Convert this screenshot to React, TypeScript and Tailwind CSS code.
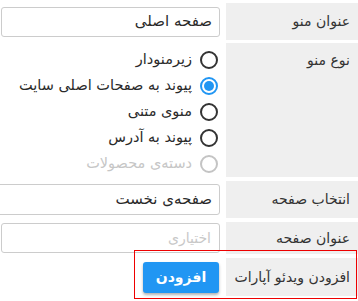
import React from "react";

function Radio({ label, checked, disabled }: { label: string; checked?: boolean; disabled?: boolean }) {
  return (
    <div className="flex items-center h-[26px]">
      <div className="w-[18px] flex justify-center mr-[2px] ml-[8px]">
        {checked ? (
          <div className="w-[18px] h-[18px] rounded-full border-2 border-[#2196f3] flex items-center justify-center">
            <div className="w-[10px] h-[10px] rounded-full bg-[#2196f3]" />
          </div>
        ) : (
          <div className={`w-[18px] h-[18px] rounded-full border-2 ${disabled ? "border-[#c4c4c4]" : "border-[#333]"}`} />
        )}
      </div>
      <span className={`text-[14.5px] ${disabled ? "text-[#c6c6c6]" : "text-[#2a2a2a]"}`}>{label}</span>
    </div>
  );
}

export default function App() {
  return (
    <div
      dir="rtl"
      className="relative w-[358px] h-[301px] bg-white overflow-hidden pt-[3px] flex flex-col"
      style={{ fontFamily: "'DejaVu Sans', Tahoma, sans-serif" }}
    >
      {/* row 1 */}
      <div className="flex h-[37px]">
        <div className="w-[132px] bg-[#efefef] flex items-center pr-[8px] text-[14px] text-[#333]">عنوان منو</div>
        <div className="w-[226px] flex items-center pr-[6px] pl-[1px]">
          <div className="w-full h-[30px] border border-[#ccc] rounded-[3px] flex items-center pr-[7px] text-[15px] text-[#2a2a2a]">صفحه اصلی</div>
        </div>
      </div>
      {/* row 2 */}
      <div className="flex h-[134px] mt-[3px]">
        <div className="w-[132px] bg-[#efefef] pr-[8px] pt-[7px] text-[14px] text-[#333]">نوع منو</div>
        <div className="w-[226px] pr-[6px] pt-[4px]">
          <Radio label="زیرمنودار" />
          <Radio label="پیوند به صفحات اصلی سایت" checked />
          <Radio label="منوی متنی" />
          <Radio label="پیوند به آدرس" />
          <Radio label="دسته‌ی محصولات" disabled />
        </div>
      </div>
      {/* row 3 */}
      <div className="flex h-[37px] mt-[4px]">
        <div className="w-[132px] bg-[#efefef] flex items-center pr-[8px] text-[14px] text-[#333]">انتخاب صفحه</div>
        <div className="w-[226px] flex items-center pr-[6px] overflow-hidden">
          <div className="w-[230px] shrink-0 h-[31px] border border-[#ccc] rounded-[3px] flex items-center pr-[7px] text-[15px] text-[#2a2a2a]">صفحه‌ی نخست</div>
        </div>
      </div>
      {/* row 4 */}
      <div className="flex h-[32px] mt-[4px]">
        <div className="w-[132px] bg-[#efefef] flex items-center pr-[8px] text-[14px] text-[#333]">عنوان صفحه</div>
        <div className="w-[226px] flex items-center pr-[6px] pl-[1px]">
          <div className="w-full h-[30px] border border-[#ccc] rounded-[3px] flex items-center pr-[8px] text-[14px] text-[#c8c8c8]">اختیاری</div>
        </div>
      </div>
      {/* row 5 */}
      <div className="flex h-[38px] mt-[4px]">
        <div className="w-[132px] bg-[#efefef] flex items-center pr-[8px] text-[14px] text-[#333]">افزودن ویدئو آپارات</div>
        <div className="w-[226px] flex items-center pr-[7px]">
          <button className="w-[76px] h-[31px] bg-[#2196f3] text-white rounded-[3px] text-[14px] font-bold shadow-[0_2px_3px_rgba(0,0,0,0.3)]">افزودن</button>
        </div>
      </div>
      <div className="absolute left-[134px] top-[250px] w-[223px] h-[49px] border border-[#e00] pointer-events-none" />
    </div>
  );
}
